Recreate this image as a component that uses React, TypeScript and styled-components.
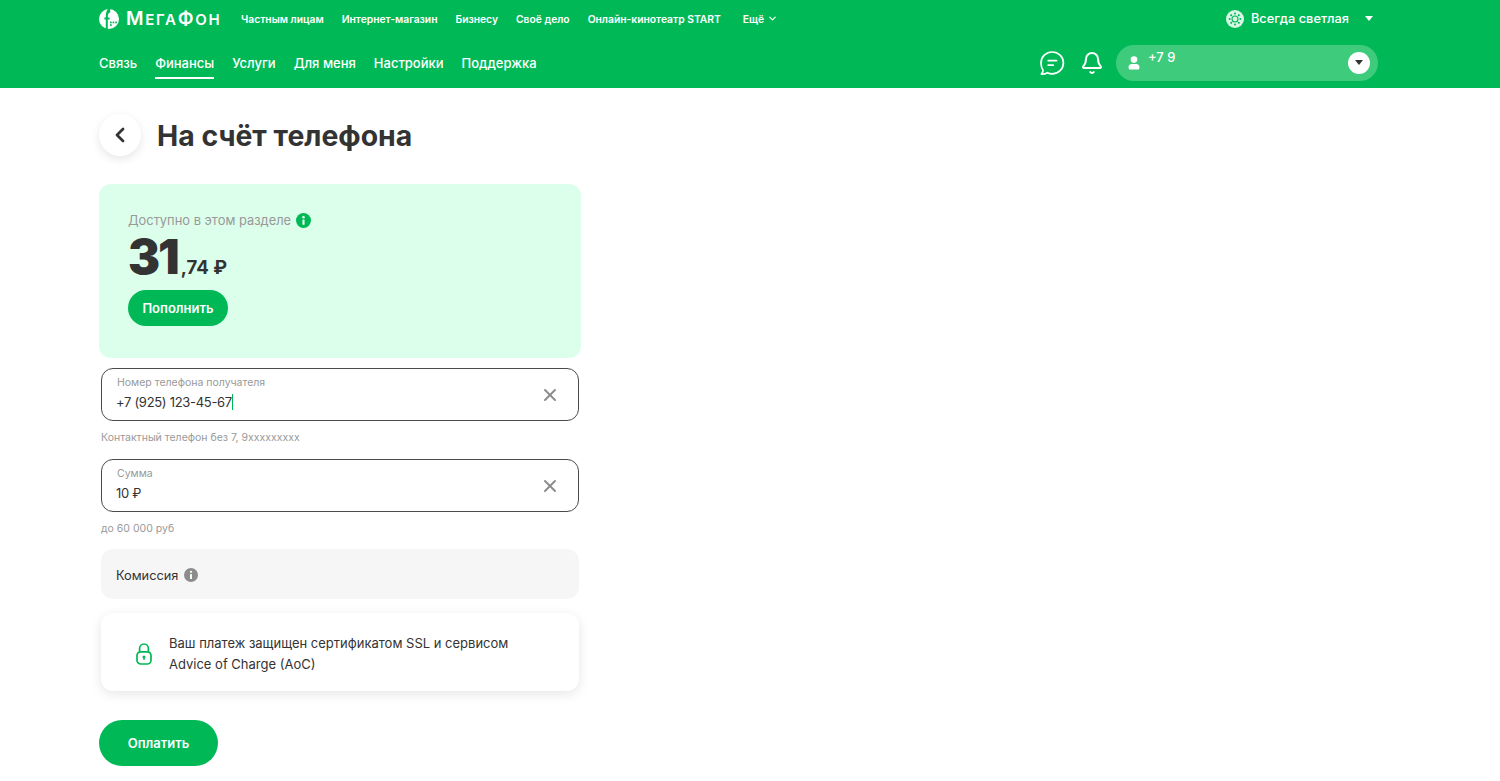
import styled, { createGlobalStyle } from 'styled-components';
import { Bell, ChevronDown, ChevronLeft, X } from 'lucide-react';

const GREEN = '#00b956';
const INK = '#333333';

const GlobalStyle = createGlobalStyle`
  html, body {
    margin: 0;
    padding: 0;
    background: #fff;
    font-family: Inter, "Noto Sans", sans-serif;
    color: ${INK};
    overflow: hidden;
  }
  * { box-sizing: border-box; }
`;

const Header = styled.header`
  height: 88px;
  background: ${GREEN};
  color: #fff;
  padding: 0 122px 0 99px;
`;

const TopRow = styled.div`
  height: 37px;
  display: flex;
  align-items: center;
`;

const Logo = styled.div`
  display: flex;
  align-items: center;
  gap: 7px;
  width: 142px;
`;

const Wordmark = styled.span`
  font-size: 15px;
  font-weight: 600;
  letter-spacing: 1.7px;
  white-space: nowrap;
`;

const WordmarkCap = styled.span`
  font-size: 19px;
`;

const TopNav = styled.nav`
  display: flex;
  align-items: center;
  gap: 18px;
`;

const TopLink = styled.a`
  display: flex;
  align-items: center;
  gap: 3px;
  font-size: 10.3px;
  font-weight: 600;
  white-space: nowrap;
`;

const MoreLink = styled(TopLink)`
  margin-left: 4px;
`;

const ThemeSwitch = styled.div`
  margin-left: auto;
  margin-right: 5px;
  display: flex;
  align-items: center;
  gap: 7px;
  font-size: 12.8px;
  font-weight: 500;
`;

const Caret = styled.span<{ $color?: string }>`
  width: 0;
  height: 0;
  border-left: 4px solid transparent;
  border-right: 4px solid transparent;
  border-top: 5px solid ${({ $color }) => $color || '#fff'};
`;

const ThemeCaret = styled(Caret)`
  margin-left: 9px;
`;

const MainRow = styled.div`
  height: 51px;
  display: flex;
  align-items: center;
`;

const MainNav = styled.nav`
  display: flex;
  gap: 18px;
`;

const MainLink = styled.a<{ $active?: boolean }>`
  font-size: 13px;
  font-weight: 500;
  line-height: 30px;
  height: 31px;
  margin-top: 2px;
  white-space: nowrap;
  border-bottom: 2px solid ${({ $active }) => ($active ? '#fff' : 'transparent')};
`;

const HeaderActions = styled.div`
  margin-left: auto;
  display: flex;
  align-items: center;
`;

const ChatButton = styled.span`
  display: flex;
  margin-right: 15px;
`;

const BellButton = styled.span`
  display: flex;
  margin-right: 12px;
`;

const Account = styled.div`
  width: 262px;
  height: 36px;
  border-radius: 18px;
  background: #3ecb7c;
  display: flex;
  align-items: flex-start;
  padding: 0 8px 0 12px;
  font-size: 13px;
  font-weight: 500;
`;

const AccountIcon = styled.span`
  display: flex;
  margin-top: 11px;
  margin-right: 8px;
`;

const AccountPhone = styled.span`
  margin-top: 4px;
  line-height: 16px;
`;

const AccountToggle = styled.span`
  margin-left: auto;
  margin-top: 7px;
  width: 22px;
  height: 22px;
  border-radius: 50%;
  background: #fff;
  display: flex;
  align-items: center;
  justify-content: center;
`;

const Main = styled.main`
  padding-left: 99px;
`;

const TitleRow = styled.div`
  display: flex;
  align-items: center;
  gap: 16px;
  padding-top: 25px;
`;

const BackButton = styled.span`
  width: 42px;
  height: 42px;
  border-radius: 50%;
  background: #fff;
  box-shadow: 0 3px 10px rgba(0, 0, 0, 0.1);
  display: flex;
  align-items: center;
  justify-content: center;
  margin-bottom: 1px;
`;

const Title = styled.h1`
  margin: 0;
  height: 44px;
  padding-top: 1px;
  font-size: 28.4px;
  line-height: 44px;
  font-weight: 700;
  white-space: nowrap;
`;

const Column = styled.div`
  width: 482px;
  margin-top: 27px;
`;

const BalanceCard = styled.section`
  height: 174px;
  border-radius: 12px;
  background: #dcffec;
  padding: 27px 29px 0;
`;

const BalanceLabel = styled.div`
  display: flex;
  align-items: center;
  gap: 5px;
  height: 18px;
  font-size: 12.9px;
  color: #999999;
`;

const Amount = styled.div`
  display: flex;
  align-items: baseline;
  height: 48px;
  margin-top: 4px;
  line-height: 48px;
  font-weight: 800;
`;

const AmountWhole = styled.span`
  font-size: 48px;
  font-weight: 900;
  letter-spacing: -2px;
`;

const AmountFraction = styled.span`
  font-size: 18.6px;
  font-weight: 700;
  margin-left: 3px;
`;

const PrimaryButton = styled.button<{ $wide?: boolean }>`
  display: block;
  border: none;
  color: #fff;
  background: ${GREEN};
  font-family: inherit;
  font-weight: 600;
  padding: 0;
  height: ${({ $wide }) => ($wide ? 46 : 36)}px;
  width: ${({ $wide }) => ($wide ? 119 : 100)}px;
  border-radius: ${({ $wide }) => ($wide ? 23 : 18)}px;
  font-size: 13px;
`;

const TopUpButton = styled(PrimaryButton)`
  margin-top: 9px;
`;

const Fields = styled.div`
  padding: 10px 2px 0;
`;

const Field = styled.div`
  height: 53px;
  border: 1px solid #4a4a4a;
  border-radius: 12px;
  display: flex;
  align-items: center;
  justify-content: space-between;
  padding: 0 18px 0 14px;
`;

const FieldBody = styled.div`
  display: flex;
  flex-direction: column;
  margin-bottom: 2px;
`;

const FieldLabel = styled.label`
  font-size: 10.5px;
  line-height: 14px;
  color: #999999;
  padding-left: 1px;
`;

const FieldValue = styled.div`
  display: flex;
  align-items: center;
  font-size: 13px;
  line-height: 20px;
  margin-top: 2px;
  letter-spacing: -0.3px;
`;

const Cursor = styled.span`
  width: 1px;
  height: 16px;
  background: #00b956;
`;

const Clear = styled.span`
  display: flex;
  color: #8c8c8c;
`;

const Hint = styled.div<{ $after: number }>`
  font-size: 10.5px;
  line-height: 14px;
  color: #999999;
  margin-top: 10px;
  margin-bottom: ${({ $after }) => $after}px;
`;

const FeeRow = styled.div`
  height: 50px;
  border-radius: 12px;
  background: #f6f6f6;
  display: flex;
  align-items: center;
  gap: 6px;
  padding: 2px 0 0 15px;
  font-size: 12.8px;
`;

const SecureCard = styled.div`
  height: 78px;
  margin-top: 14px;
  border-radius: 12px;
  background: #fff;
  box-shadow: 0 3px 12px rgba(0, 0, 0, 0.1);
  display: flex;
  align-items: center;
  gap: 17px;
  padding: 3px 0 0 35px;
  font-size: 13px;
  line-height: 21px;
`;

const PayButton = styled(PrimaryButton)`
  margin-top: 29px;
  font-size: 13px;
`;

function InfoIcon({ color, size }: { color: string; size: number }) {
  return (
    <svg width={size} height={size} viewBox="0 0 16 16">
      <circle cx="8" cy="8" r="8" fill={color} />
      <circle cx="8" cy="4.4" r="1.3" fill="#fff" />
      <rect x="6.9" y="6.8" width="2.2" height="5.8" rx="0.6" fill="#fff" />
    </svg>
  );
}

function LogoMark() {
  return (
    <svg width="20" height="20" viewBox="0 0 20 20">
      <circle cx="10" cy="10" r="10" fill="#fff" />
      <path d="M9 0h2.2v3.4C9.6 4 8.8 5.2 8.8 7v1.4h1.8v2H8.8V20H6.8V10.4H5.4v-2h1.4V7C6.8 3.8 7.6 1.6 9 0z" fill={GREEN} />
      <rect x="11" y="12.6" width="1.7" height="1.7" fill={GREEN} />
      <rect x="13.6" y="12.6" width="1.7" height="1.7" fill={GREEN} />
      <rect x="16.2" y="12.6" width="1.7" height="1.7" fill={GREEN} />
      <rect x="11" y="15.2" width="1.7" height="1.7" fill={GREEN} />
    </svg>
  );
}

function SunBadge() {
  const spokes = [0, 45, 90, 135, 180, 225, 270, 315];
  return (
    <svg width="18" height="18" viewBox="0 0 18 18">
      <circle cx="9" cy="9" r="9" fill="#d9f5e5" />
      <circle cx="9" cy="9" r="3" fill="none" stroke={GREEN} strokeWidth="1.1" />
      {spokes.map((a) => (
        <circle key={a} cx="9" cy="3.6" r="1" fill={GREEN} transform={`rotate(${a} 9 9)`} />
      ))}
    </svg>
  );
}

function ChatIcon() {
  return (
    <svg width="26" height="26" viewBox="0 0 26 26" fill="none" stroke="#fff" strokeWidth="1.7" strokeLinecap="round" strokeLinejoin="round">
      <path d="M13.2 2C19.4 2 24.4 6.9 24.4 12.9S19.4 23.8 13.2 23.8c-1.7 0-3.3-.4-4.8-1.1-1.4.9-3.4 1.5-6 1.4 1-1 1.6-2.2 1.7-3.7C2.9 18.5 2 15.8 2 12.9 2 6.9 7 2 13.2 2z" />
      <path d="M9.2 10.6h8.4M9.2 15.2h5" />
    </svg>
  );
}

function PersonIcon() {
  return (
    <svg width="12" height="14" viewBox="0 0 12 14" fill="#fff">
      <circle cx="6" cy="3.6" r="3.3" />
      <path d="M0.6 11c0-2 1.6-3 3-3h4.8c1.4 0 3 1 3 3v1.2c0 .8-.6 1.4-1.4 1.4H2c-.8 0-1.4-.6-1.4-1.4z" />
    </svg>
  );
}

function LockIcon() {
  return (
    <svg width="16" height="22" viewBox="0 0 16 22" fill="none" stroke={GREEN} strokeWidth="1.7">
      <path d="M3.6 9V5.4a4.4 4.4 0 0 1 8.8 0V9" />
      <rect x="1" y="8.8" width="14" height="12.2" rx="3.8" />
      <circle cx="8" cy="14" r="1.5" fill={GREEN} stroke="none" />
      <path d="M8 14v3" strokeWidth="1.3" />
    </svg>
  );
}

const topLinks = ['Частным лицам', 'Интернет-магазин', 'Бизнесу', 'Своё дело', 'Онлайн-кинотеатр START'];
const mainLinks = ['Связь', 'Финансы', 'Услуги', 'Для меня', 'Настройки', 'Поддержка'];

export default function App() {
  return (
    <>
      <GlobalStyle />
      <Header>
        <TopRow>
          <Logo>
            <LogoMark />
            <Wordmark>
              <WordmarkCap>М</WordmarkCap>ЕГА<WordmarkCap>Ф</WordmarkCap>ОН
            </Wordmark>
          </Logo>
          <TopNav>
            {topLinks.map((link) => (
              <TopLink key={link}>{link}</TopLink>
            ))}
            <MoreLink>
              Ещё <ChevronDown size={11} strokeWidth={2.5} />
            </MoreLink>
          </TopNav>
          <ThemeSwitch>
            <SunBadge />
            Всегда светлая
            <ThemeCaret />
          </ThemeSwitch>
        </TopRow>
        <MainRow>
          <MainNav>
            {mainLinks.map((link) => (
              <MainLink key={link} $active={link === 'Финансы'}>
                {link}
              </MainLink>
            ))}
          </MainNav>
          <HeaderActions>
            <ChatButton>
              <ChatIcon />
            </ChatButton>
            <BellButton>
              <Bell size={24} strokeWidth={2} />
            </BellButton>
            <Account>
              <AccountIcon>
                <PersonIcon />
              </AccountIcon>
              <AccountPhone>+7 9</AccountPhone>
              <AccountToggle>
                <Caret $color={INK} />
              </AccountToggle>
            </Account>
          </HeaderActions>
        </MainRow>
      </Header>
      <Main>
        <TitleRow>
          <BackButton>
            <ChevronLeft size={24} strokeWidth={2.8} color={INK} />
          </BackButton>
          <Title>На счёт телефона</Title>
        </TitleRow>
        <Column>
          <BalanceCard>
            <BalanceLabel>
              Доступно в этом разделе <InfoIcon color={GREEN} size={15} />
            </BalanceLabel>
            <Amount>
              <AmountWhole>31</AmountWhole>
              <AmountFraction>,74 ₽</AmountFraction>
            </Amount>
            <TopUpButton>Пополнить</TopUpButton>
          </BalanceCard>
          <Fields>
            <Field>
              <FieldBody>
                <FieldLabel>Номер телефона получателя</FieldLabel>
                <FieldValue>
                  +7 (925) 123-45-67
                  <Cursor />
                </FieldValue>
              </FieldBody>
              <Clear>
                <X size={20} strokeWidth={2.4} />
              </Clear>
            </Field>
            <Hint $after={14}>Контактный телефон без 7, 9xxxxxxxxx</Hint>
            <Field>
              <FieldBody>
                <FieldLabel>Сумма</FieldLabel>
                <FieldValue>10 ₽</FieldValue>
              </FieldBody>
              <Clear>
                <X size={20} strokeWidth={2.4} />
              </Clear>
            </Field>
            <Hint $after={13}>до 60 000 руб</Hint>
            <FeeRow>
              Комиссия <InfoIcon color="#8c8c8c" size={14} />
            </FeeRow>
            <SecureCard>
              <LockIcon />
              <div>
                Ваш платеж защищен сертификатом SSL и сервисом
                <br />
                Advice of Charge (AoC)
              </div>
            </SecureCard>
          </Fields>
          <PayButton $wide>Оплатить</PayButton>
        </Column>
      </Main>
    </>
  );
}
